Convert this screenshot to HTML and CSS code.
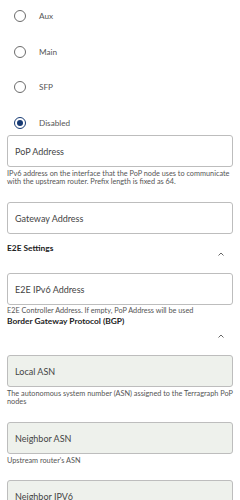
FILE: index.html
```html
<!DOCTYPE html>
<html lang="en">
<head>
    <meta charset="UTF-8">
    <meta name="viewport" content="width=device-width, initial-scale=1.0">
    <title>PoP Settings</title>
    <link rel="stylesheet" href="styles.css">
</head>
<body>
    <div class="form">
        <!-- Interface -->
        <div class="radio-list">
            <label class="radio-row"><span class="radio"></span>Aux</label>
            <label class="radio-row"><span class="radio"></span>Main</label>
            <label class="radio-row"><span class="radio"></span>SFP</label>
            <label class="radio-row"><span class="radio checked"></span>Disabled</label>
        </div>

        <div class="field">PoP Address</div>
        <p class="help">IPv6 address on the interface that the PoP node uses to communicate with the upstream router. Prefix length is fixed as 64.</p>

        <div class="field spaced">Gateway Address</div>

        <!-- E2E Settings -->
        <div class="section-head">
            <h3>E2E Settings</h3>
            <svg class="chevron" width="6" height="4" viewBox="0 0 6 4"><polyline points="0.5,3.5 3,1 5.5,3.5" fill="none" stroke="#666" stroke-width="1"/></svg>
        </div>
        <div class="field">E2E IPv6 Address</div>
        <p class="help short">E2E Controller Address. If empty, PoP Address will be used</p>

        <!-- BGP -->
        <div class="section-head bgp">
            <h3>Border Gateway Protocol (BGP)</h3>
            <svg class="chevron" width="6" height="4" viewBox="0 0 6 4"><polyline points="0.5,3.5 3,1 5.5,3.5" fill="none" stroke="#666" stroke-width="1"/></svg>
        </div>
        <div class="field filled">Local ASN</div>
        <p class="help">The autonomous system number (ASN) assigned to the Terragraph PoP nodes</p>

        <div class="field filled spaced">Neighbor ASN</div>
        <p class="help">Upstream router's ASN</p>

        <div class="field filled last">Neighbor IPV6</div>
    </div>
</body>
</html>
```

FILE: styles.css
```css
body {
    font-family: Lato, "Open Sans", sans-serif;
    margin: 0;
    padding: 0 7px;
    background: #fff;
    color: #333;
}
.radio-list {
    display: flex;
    flex-direction: column;
    gap: 11.7px;
    padding-top: 4px;
}
.radio-row {
    display: flex;
    align-items: center;
    height: 24px;
    font-size: 8.2px;
    color: #555;
}
.radio {
    width: 10px;
    height: 10px;
    border: 1.2px solid #6b6b6b;
    border-radius: 50%;
    margin: 0 13px 0 7px;
    position: relative;
}
.radio.checked {
    border-color: #163a73;
    border-width: 1.5px;
}
.radio.checked::after {
    content: "";
    position: absolute;
    left: 2px;
    top: 2px;
    width: 6px;
    height: 6px;
    border-radius: 50%;
    background: #163a73;
}
.field {
    height: 30px;
    border: 1px solid #bdbdbd;
    border-radius: 3px;
    padding-left: 7px;
    display: flex;
    align-items: center;
    font-size: 9px;
    color: #444;
}
.field.spaced { margin-top: 16px; }
.field.last { margin-top: 15px; }
.field.filled { background: #eef1ec; }
.help {
    margin: 3px 0 0;
    font-size: 7.3px;
    line-height: 8px;
    color: #555;
}
.help.short { margin-top: 2px; }
.section-head {
    display: flex;
    justify-content: space-between;
    padding-top: 10px;
    height: 29px;
}
.section-head h3 {
    margin: 0;
    font-size: 8.4px;
    line-height: 8px;
    color: #222;
}
.section-head .chevron {
    margin: 8px 9px 0 0;
}
.section-head.bgp {
    padding-top: 2px;
    height: 38px;
}
.section-head.bgp .chevron {
    margin-top: 17px;
}
```
